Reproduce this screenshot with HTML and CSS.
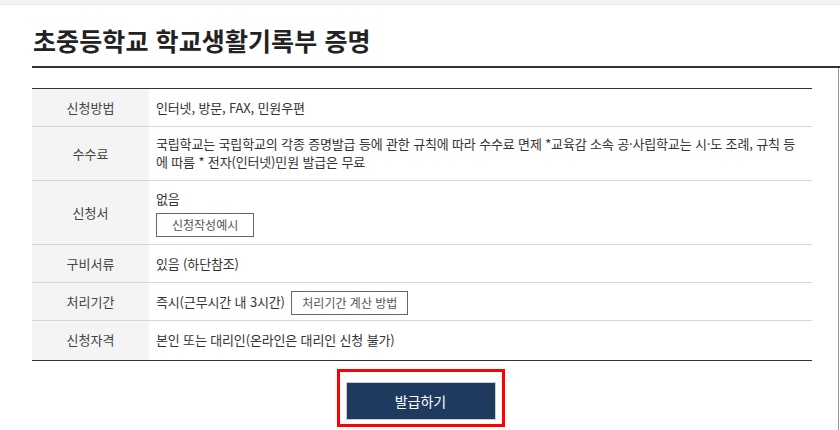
FILE: index.html
```html
<!DOCTYPE html>
<html lang="ko">

<head>
    <meta charset="UTF-8">
    <meta name="viewport" content="width=device-width, initial-scale=1.0">
    <link rel="stylesheet" href="styles.css">
    <title>학교생활기록부 증명</title>
</head>

<body>
    <div class="topBar"></div>

    <div class="page">
        <h2 class="title">초중등학교 학교생활기록부 증명</h2>

        <div class="content">
            <table class="infoTable">
                <tbody>
                    <tr>
                        <th>신청방법</th>
                        <td>인터넷, 방문, FAX, 민원우편</td>
                    </tr>
                    <tr>
                        <th>수수료</th>
                        <td class="multi">국립학교는 국립학교의 각종 증명발급 등에 관한 규칙에 따라 수수료 면제 *교육감 소속 공·사립학교는 시·도 조례, 규칙 등에 따름 * 전자(인터넷)민원 발급은 무료</td>
                    </tr>
                    <tr>
                        <th>신청서</th>
                        <td class="stack">
                            <div>없음</div>
                            <button class="btnLine" type="button">신청작성예시</button>
                        </td>
                    </tr>
                    <tr>
                        <th>구비서류</th>
                        <td>있음 (하단참조)</td>
                    </tr>
                    <tr>
                        <th>처리기간</th>
                        <td>즉시(근무시간 내 3시간) <button class="btnLine inline" type="button">처리기간 계산 방법</button></td>
                    </tr>
                    <tr class="lastRow">
                        <th>신청자격</th>
                        <td>본인 또는 대리인(온라인은 대리인 신청 불가)</td>
                    </tr>
                </tbody>
            </table>

            <div class="btnArea">
                <div class="highlight">
                    <button class="btnIssue" type="button">발급하기</button>
                </div>
            </div>
        </div>
    </div>
</body>

</html>
```

FILE: styles.css
```css
body {
    margin: 0;
    background-color: #ffffff;
    color: #333333;
    font-family: "Noto Sans CJK KR", "Noto Sans", sans-serif;
    font-size: 13px;
    overflow: hidden;
}

.topBar {
    height: 4px;
    background-color: #f4f3f3;
    border-bottom: 1px solid #e8e6e6;
}

.page {
    width: 839px;
}

.title {
    margin: 0 -2px 0 32px;
    padding: 19px 0 9px 1px;
    font-size: 25px;
    font-weight: 700;
    line-height: 33px;
    color: #222222;
    letter-spacing: 0.1px;
    border-bottom: 2px solid #333333;
}

.content {
    padding: 20px 0 0 32px;
    border-right: 1px solid #999999;
    height: 400px;
}

.infoTable {
    width: 780px;
    border-collapse: collapse;
    border-top: 1px solid #333333;
    border-bottom: 1px solid #333333;
}

.infoTable th,
.infoTable td {
    border-bottom: 1px solid #d6d6d6;
    line-height: 18px;
    padding: 10px 8px 9px;
}

.infoTable th {
    width: 101px;
    background-color: #f4f4f4;
    font-weight: 400;
    color: #444444;
    text-align: center;
}

.infoTable td {
    text-align: left;
    padding-left: 7px;
    padding-right: 11px;
    letter-spacing: -0.15px;
}

.infoTable td.multi {
    padding-top: 8px;
    padding-bottom: 9px;
}

.infoTable td.stack {
    padding-top: 9px;
    padding-bottom: 7px;
}

.infoTable .lastRow th,
.infoTable .lastRow td {
    padding-bottom: 11px;
    border-bottom: none;
}

.stack div {
    margin-bottom: 5px;
}

.btnLine {
    display: inline-block;
    height: 24px;
    padding: 0 15px;
    border: 1px solid #666666;
    background-color: #ffffff;
    color: #555555;
    font-family: inherit;
    font-size: 12px;
    line-height: 22px;
    vertical-align: middle;
}

.btnLine.inline {
    padding: 0 10px;
    margin: -4px 0 -4px 3px;
}

.btnArea {
    display: flex;
    justify-content: center;
    width: 780px;
    margin-top: 8px;
}

.highlight {
    border: 3px solid #ff0000;
    padding: 10px 6px 4px 6px;
    margin-right: 3px;
}

.btnIssue {
    display: block;
    width: 150px;
    height: 38px;
    background-color: #1e3a5f;
    border: 1px solid #c9cdd3;
    color: #ffffff;
    font-family: inherit;
    font-size: 14px;
}
```
